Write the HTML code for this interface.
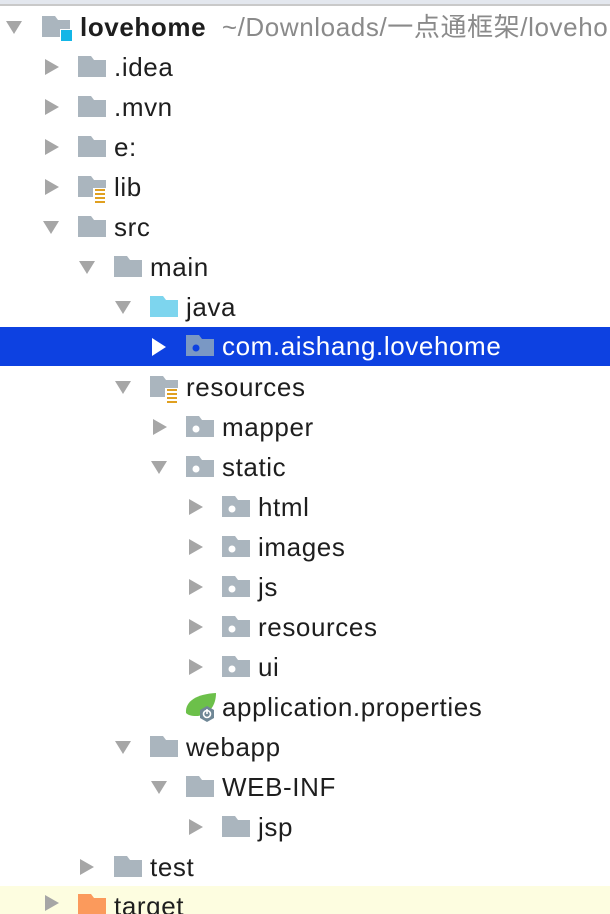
<!DOCTYPE html>
<html><head><meta charset="utf-8"><style>
html,body{margin:0;padding:0;}
body{width:610px;height:914px;overflow:hidden;background:#fff;position:relative;font-family:"Liberation Sans","Noto Sans CJK SC",sans-serif;}
.top{position:absolute;left:0;top:0;width:610px;height:4px;background:#e3e7ee;border-bottom:2px solid #c9c9c9;}
.row{position:absolute;left:0;width:610px;height:40px;overflow:hidden;}
.sel{background:#0d41e1;}
.yel{background:#fdfde0;}
.ar{position:absolute;top:12px;}
.ic{position:absolute;top:9px;}
.tx{position:absolute;top:5px;font-size:26px;letter-spacing:0.6px;line-height:30px;color:#1e1e1e;white-space:nowrap;}
.sel .tx{color:#fff;}
</style></head><body>
<div class="top"></div>

<svg width="0" height="0" style="position:absolute">
<defs>
<path id="fd" d="M0 0H13L16 4H28V21H0Z"/>
<path id="rt" d="M0 0L14 8L0 16Z"/>
<path id="dn" d="M0 0H16L8 13Z"/>
</defs></svg>

<div class="row" style="top:7px">
<svg class="ar" style="left:6px;top:14px" width="16" height="13"><use href="#dn" fill="#a6a6a6"/></svg>
<svg class="ic" style="left:42px" width="32" height="26"><use href="#fd" fill="#aab5be"/><rect x="18" y="13" width="12" height="12" fill="#fff"/><rect x="19" y="14" width="11" height="11" fill="#13b6e7"/></svg>
<div class="tx" style="left:80px;font-weight:bold">lovehome <span style="font-weight:normal;color:#8a8a8a">&nbsp;~/Downloads/一点通框架/lovehome</span></div>
</div>

<div class="row" style="top:47px"><svg class="ar" style="left:45px" width="14" height="16"><use href="#rt" fill="#a6a6a6"/></svg><svg class="ic" style="left:78px" width="28" height="22"><use href="#fd" fill="#aab5be"/></svg><div class="tx" style="left:114px">.idea</div></div>
<div class="row" style="top:87px"><svg class="ar" style="left:45px" width="14" height="16"><use href="#rt" fill="#a6a6a6"/></svg><svg class="ic" style="left:78px" width="28" height="22"><use href="#fd" fill="#aab5be"/></svg><div class="tx" style="left:114px">.mvn</div></div>
<div class="row" style="top:127px"><svg class="ar" style="left:45px" width="14" height="16"><use href="#rt" fill="#a6a6a6"/></svg><svg class="ic" style="left:78px" width="28" height="22"><use href="#fd" fill="#aab5be"/></svg><div class="tx" style="left:114px">e:</div></div>
<div class="row" style="top:167px"><svg class="ar" style="left:45px" width="14" height="16"><use href="#rt" fill="#a6a6a6"/></svg><svg class="ic" style="left:78px" width="34" height="28"><use href="#fd" fill="#aab5be"/><rect x="15" y="12" width="14" height="14" fill="#fff"/><g fill="#e0a020"><rect x="17" y="13" width="10" height="2"/><rect x="17" y="17" width="10" height="2"/><rect x="17" y="21" width="10" height="2"/><rect x="17" y="25" width="10" height="2"/></g></svg><div class="tx" style="left:114px">lib</div></div>
<div class="row" style="top:207px"><svg class="ar" style="left:43px;top:14px" width="16" height="13"><use href="#dn" fill="#a6a6a6"/></svg><svg class="ic" style="left:78px" width="28" height="22"><use href="#fd" fill="#aab5be"/></svg><div class="tx" style="left:114px">src</div></div>

<div class="row" style="top:247px"><svg class="ar" style="left:79px;top:14px" width="16" height="13"><use href="#dn" fill="#a6a6a6"/></svg><svg class="ic" style="left:114px" width="28" height="22"><use href="#fd" fill="#aab5be"/></svg><div class="tx" style="left:150px">main</div></div>

<div class="row" style="top:287px"><svg class="ar" style="left:115px;top:14px" width="16" height="13"><use href="#dn" fill="#a6a6a6"/></svg><svg class="ic" style="left:150px" width="28" height="22"><use href="#fd" fill="#7dd5ee"/></svg><div class="tx" style="left:186px">java</div></div>

<div class="row sel" style="top:327px;height:39px"><svg class="ar" style="left:152px;top:11px" width="14" height="18"><path d="M0 0L14 9L0 18Z" fill="#fff"/></svg><svg class="ic" style="left:186px;top:8px" width="28" height="22"><use href="#fd" fill="#7a98c4"/><circle cx="10" cy="13" r="3.5" fill="#0d41e1"/></svg><div class="tx" style="left:222px;top:4px">com.aishang.lovehome</div></div>

<div class="row" style="top:367px"><svg class="ar" style="left:115px;top:14px" width="16" height="13"><use href="#dn" fill="#a6a6a6"/></svg><svg class="ic" style="left:150px" width="34" height="28"><use href="#fd" fill="#aab5be"/><rect x="15" y="12" width="14" height="14" fill="#fff"/><g fill="#e0a020"><rect x="17" y="13" width="10" height="2"/><rect x="17" y="17" width="10" height="2"/><rect x="17" y="21" width="10" height="2"/><rect x="17" y="25" width="10" height="2"/></g></svg><div class="tx" style="left:186px">resources</div></div>

<div class="row" style="top:407px"><svg class="ar" style="left:153px" width="14" height="16"><use href="#rt" fill="#a6a6a6"/></svg><svg class="ic" style="left:186px" width="28" height="22"><use href="#fd" fill="#aab5be"/><circle cx="10" cy="13" r="3.5" fill="#fff"/></svg><div class="tx" style="left:222px">mapper</div></div>
<div class="row" style="top:447px"><svg class="ar" style="left:151px;top:14px" width="16" height="13"><use href="#dn" fill="#a6a6a6"/></svg><svg class="ic" style="left:186px" width="28" height="22"><use href="#fd" fill="#aab5be"/><circle cx="10" cy="13" r="3.5" fill="#fff"/></svg><div class="tx" style="left:222px">static</div></div>

<div class="row" style="top:487px"><svg class="ar" style="left:189px" width="14" height="16"><use href="#rt" fill="#a6a6a6"/></svg><svg class="ic" style="left:222px" width="28" height="22"><use href="#fd" fill="#aab5be"/><circle cx="10" cy="13" r="3.5" fill="#fff"/></svg><div class="tx" style="left:258px">html</div></div>
<div class="row" style="top:527px"><svg class="ar" style="left:189px" width="14" height="16"><use href="#rt" fill="#a6a6a6"/></svg><svg class="ic" style="left:222px" width="28" height="22"><use href="#fd" fill="#aab5be"/><circle cx="10" cy="13" r="3.5" fill="#fff"/></svg><div class="tx" style="left:258px">images</div></div>
<div class="row" style="top:567px"><svg class="ar" style="left:189px" width="14" height="16"><use href="#rt" fill="#a6a6a6"/></svg><svg class="ic" style="left:222px" width="28" height="22"><use href="#fd" fill="#aab5be"/><circle cx="10" cy="13" r="3.5" fill="#fff"/></svg><div class="tx" style="left:258px">js</div></div>
<div class="row" style="top:607px"><svg class="ar" style="left:189px" width="14" height="16"><use href="#rt" fill="#a6a6a6"/></svg><svg class="ic" style="left:222px" width="28" height="22"><use href="#fd" fill="#aab5be"/><circle cx="10" cy="13" r="3.5" fill="#fff"/></svg><div class="tx" style="left:258px">resources</div></div>
<div class="row" style="top:647px"><svg class="ar" style="left:189px" width="14" height="16"><use href="#rt" fill="#a6a6a6"/></svg><svg class="ic" style="left:222px" width="28" height="22"><use href="#fd" fill="#aab5be"/><circle cx="10" cy="13" r="3.5" fill="#fff"/></svg><div class="tx" style="left:258px">ui</div></div>

<div class="row" style="top:687px"><svg class="ic" style="left:185px;top:4px" width="36" height="36"><path d="M1 22C0 10 12 3 31 2C31 14 25 23 13 25C8 25 4 25 1 22Z" fill="#6cc04a"/><polygon points="22,15 29,19 29,27 22,31 15,27 15,19" fill="#6f8796"/><circle cx="22" cy="23" r="3.5" fill="none" stroke="#fff" stroke-width="1.6"/><rect x="21.2" y="18" width="1.6" height="5" fill="#fff"/></svg><div class="tx" style="left:222px">application.properties</div></div>

<div class="row" style="top:727px"><svg class="ar" style="left:115px;top:14px" width="16" height="13"><use href="#dn" fill="#a6a6a6"/></svg><svg class="ic" style="left:150px" width="28" height="22"><use href="#fd" fill="#aab5be"/></svg><div class="tx" style="left:186px">webapp</div></div>
<div class="row" style="top:767px"><svg class="ar" style="left:151px;top:14px" width="16" height="13"><use href="#dn" fill="#a6a6a6"/></svg><svg class="ic" style="left:186px" width="28" height="22"><use href="#fd" fill="#aab5be"/></svg><div class="tx" style="left:222px">WEB-INF</div></div>
<div class="row" style="top:807px"><svg class="ar" style="left:189px" width="14" height="16"><use href="#rt" fill="#a6a6a6"/></svg><svg class="ic" style="left:222px" width="28" height="22"><use href="#fd" fill="#aab5be"/></svg><div class="tx" style="left:258px">jsp</div></div>
<div class="row" style="top:847px"><svg class="ar" style="left:80px" width="14" height="16"><use href="#rt" fill="#a6a6a6"/></svg><svg class="ic" style="left:114px" width="28" height="22"><use href="#fd" fill="#aab5be"/></svg><div class="tx" style="left:150px">test</div></div>
<div class="row yel" style="top:886px;height:28px"><svg class="ar" style="left:45px;top:9px" width="14" height="16"><use href="#rt" fill="#a6a6a6"/></svg><svg class="ic" style="left:78px;top:8px" width="28" height="22"><use href="#fd" fill="#fb9a5c"/></svg><div class="tx" style="left:114px;top:5px">target</div></div>
</body></html>
